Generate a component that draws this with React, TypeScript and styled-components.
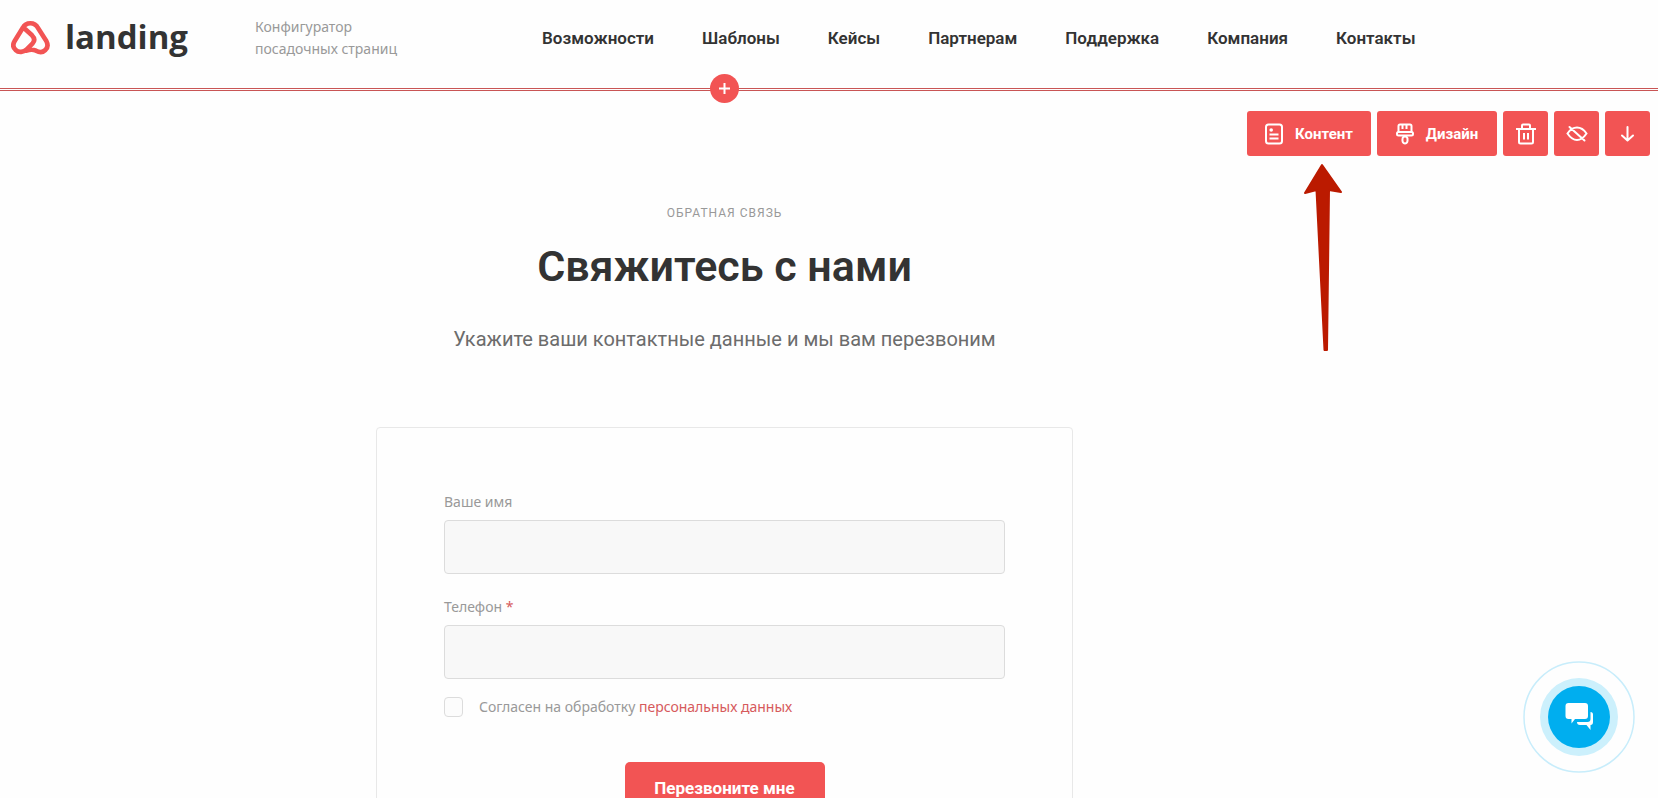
import React from 'react';
import styled, { createGlobalStyle } from 'styled-components';

const color = {
  accent: '#f25454',
  link: '#d65a5c',
  line: '#c95555',
  ink: '#333333',
  muted: '#999999',
  chat: '#00aeef',
};

const GlobalStyle = createGlobalStyle`
  *, *::before, *::after { box-sizing: border-box; }
  body {
    margin: 0;
    background: #fefefe;
    color: ${color.ink};
    font-family: Roboto, "Noto Sans", sans-serif;
  }
  button, input { font: inherit; }
`;

const Page = styled.div`
  position: relative;
  height: 100vh;
  overflow: hidden;
`;

const Header = styled.header`
  position: relative;
  display: flex;
  align-items: flex-start;
  height: 91px;
  padding: 16px 0 0 11px;
  border-bottom: 3px double ${color.line};
`;

const Logo = styled.a`
  display: flex;
  align-items: center;
  gap: 15px;
  width: 244px;
  height: 42px;
  flex: none;
  color: ${color.ink};
  text-decoration: none;
`;

const LogoText = styled.span`
  font: 700 33px/40px "Open Sans", sans-serif;
`;

const Tagline = styled.p`
  width: 287px;
  flex: none;
  margin: 0;
  color: ${color.muted};
  font: 400 14px/22px "Noto Sans", sans-serif;
`;

const Nav = styled.nav`
  display: flex;
  gap: 48px;
  height: 44px;
  align-items: center;
`;

const NavLink = styled.a`
  color: ${color.ink};
  font-size: 17px;
  line-height: 24px;
  font-weight: 600;
  text-decoration: none;
`;

const MainColumn = styled.div`
  margin-right: 209px;
`;

const AddSlot = styled.div`
  position: absolute;
  left: 0;
  right: 209px;
  top: 74px;
  display: flex;
  justify-content: center;
`;

const AddButton = styled.button`
  display: flex;
  align-items: center;
  justify-content: center;
  width: 29px;
  height: 29px;
  padding: 0;
  border: 0;
  border-radius: 50%;
  background: ${color.accent};
  color: #fff;
`;

const Tools = styled.div`
  position: absolute;
  top: 111px;
  right: 8px;
  display: flex;
  gap: 6px;
`;

const ToolButton = styled.button<{ $width?: number }>`
  display: flex;
  align-items: center;
  justify-content: center;
  gap: 12px;
  width: ${({ $width = 45 }) => $width}px;
  height: 45px;
  padding: 0;
  border: 0;
  border-radius: 3px;
  background: ${color.accent};
  color: #fff;
  font-size: 15px;
  font-weight: 700;
`;

const Pointer = styled.svg`
  position: absolute;
  top: 52px;
  left: 56px;
`;

const Section = styled.section`
  display: flex;
  flex-direction: column;
  align-items: center;
  padding-top: 114px;
`;

const Eyebrow = styled.p`
  margin: 0;
  color: ${color.muted};
  font-size: 12px;
  line-height: 16px;
  letter-spacing: 1px;
  text-transform: uppercase;
`;

const Title = styled.h1`
  margin: 19px 0 33px;
  font-size: 43px;
  line-height: 52px;
  font-weight: 600;
`;

const Subtitle = styled.p`
  margin: 0 0 74px;
  color: #6c6c6c;
  font-size: 20px;
  line-height: 28px;
`;

const Card = styled.form`
  display: flex;
  flex-direction: column;
  width: 100%;
  max-width: 697px;
  padding: 63px 67px;
  border: 1px solid #e8e8e8;
  border-radius: 4px;
`;

const Field = styled.label`
  display: flex;
  flex-direction: column;
  gap: 7px;
  margin-bottom: 22px;
  color: ${color.muted};
  font: 400 14px/22px "Noto Sans", sans-serif;
`;

const Required = styled.span`
  color: ${color.link};
`;

const Input = styled.input`
  width: 100%;
  height: 54px;
  padding: 0 16px;
  border: 1px solid #dcdcdc;
  border-radius: 4px;
  background: #f8f8f8;
`;

const Consent = styled.div`
  display: flex;
  align-items: center;
  gap: 16px;
  margin-top: -5px;
  color: ${color.muted};
  font: 400 14px/22px "Noto Sans", sans-serif;
`;

const Checkbox = styled.input`
  appearance: none;
  width: 19px;
  height: 20px;
  margin: 0;
  border: 1px solid #dcdcdc;
  border-radius: 4px;
  background: #fcfcfc;
`;

const TextLink = styled.a`
  color: ${color.link};
  text-decoration: none;
`;

const Submit = styled.button`
  align-self: center;
  width: 200px;
  height: 51px;
  margin-top: 44px;
  border: 0;
  border-radius: 5px;
  background: ${color.accent};
  color: #fff;
  font-size: 17px;
  font-weight: 700;
`;

const ChatButton = styled.button`
  position: fixed;
  right: 23px;
  bottom: 25px;
  width: 112px;
  height: 112px;
  padding: 0;
  border: 0;
  border-radius: 50%;
  background: none;
`;

const LogoMark = () => (
  <svg width="39" height="35" viewBox="32 58 117 105" fill="none" stroke={color.accent} strokeWidth="14" strokeLinecap="round" strokeLinejoin="round" aria-hidden="true">
    <path d="M70 81 L95 104 C103 112 103 121 97 128 L79 146 C70 155 55 157 46 148 C38 141 37 131 43 121 L67 82 C77 63 103 63 113 82 L138 121 C143 131 143 141 135 148 C127 156 116 155 107 150 C98 146 87 147 79 150" />
  </svg>
);

const PlusIcon = () => (
  <svg width="11" height="11" viewBox="0 0 11 11" stroke="currentColor" strokeWidth="2" aria-hidden="true">
    <path d="M5.5 0V11M0 5.5H11" />
  </svg>
);

const ContentIcon = () => (
  <svg width="18" height="22" viewBox="0 0 18 22" fill="none" stroke="currentColor" strokeWidth="2" aria-hidden="true">
    <rect x="1" y="1.5" width="16" height="19" rx="2.5" />
    <circle cx="6.2" cy="7" r="1.8" fill="currentColor" stroke="none" />
    <path d="M4.5 11.5H13.5M4.5 15.5H13.5" />
  </svg>
);

const BrushIcon = () => (
  <svg width="18" height="22" viewBox="0 0 18 22" fill="none" stroke="currentColor" strokeWidth="2" strokeLinejoin="round" aria-hidden="true">
    <path d="M2.5 9V3Q2.5 1.5 4 1.5H14Q15.5 1.5 15.5 3V9" />
    <path d="M6.5 2V6M10.5 2V6" />
    <rect x="1" y="9" width="16" height="3.5" rx="1.5" />
    <path d="M6.5 15.500Q6 20.500 9 20.500T11.500 15.500Q11 13.500 9 13.500T6.500 15.500" />
  </svg>
);

const TrashIcon = () => (
  <svg width="20" height="22" viewBox="0 0 20 22" fill="none" stroke="currentColor" strokeWidth="2" aria-hidden="true">
    <path d="M0 6H20M6 6V2.5Q6 1.5 7 1.5H13Q14 1.5 14 2.5V6" />
    <path d="M3 6V19Q3 20.5 4.5 20.5H15.5Q17 20.5 17 19V6" />
    <path d="M8 10V16.5M12 10V16.5" />
  </svg>
);

const HiddenIcon = () => (
  <svg width="22" height="18" viewBox="0 0 22 18" fill="none" stroke="currentColor" strokeWidth="2" strokeLinecap="round" aria-hidden="true">
    <path d="M1.5 8.5C4.5 4 7.5 2.5 11 2.5S17.5 4 20.5 8.5C17.5 13 14.5 15 11 15S4.5 13 1.5 8.5ZM3.5 2L18.5 15.5" />
  </svg>
);

const DownIcon = () => (
  <svg width="13" height="16" viewBox="0 0 13 16" fill="none" stroke="currentColor" strokeWidth="2" strokeLinecap="round" strokeLinejoin="round" aria-hidden="true">
    <path d="M6.5 1V14M1 9.5L6.5 14.5L12 9.5" />
  </svg>
);

const ChatIcon = () => (
  <svg width="112" height="112" viewBox="0 0 112 112" aria-hidden="true">
    <circle cx="56" cy="56" r="55" fill="none" stroke="#c8edfb" strokeWidth="1.5" />
    <circle cx="56" cy="56" r="39" fill="#ccf0fc" />
    <circle cx="56" cy="56" r="31" fill={color.chat} />
    <path fill="#fff" d="M45.500 42H62Q65 42 65 45V55Q65 58 62 58H52L48.500 62.500V58H45.500Q42.500 58 42.500 55V45Q42.500 42 45.500 42Z" />
    <path fill="#fff" d="M67.500 51Q70 51 70 53.500V61Q70 64 67.500 64V69L63.500 64H57Q54 64 54 61H64.500Q67.500 61 67.500 58Z" />
  </svg>
);

const navItems = ['Возможности', 'Шаблоны', 'Кейсы', 'Партнерам', 'Поддержка', 'Компания', 'Контакты'];

export default function App() {
  return (
    <Page>
      <GlobalStyle />
      <Header>
        <Logo href="#">
          <LogoMark />
          <LogoText>landing</LogoText>
        </Logo>
        <Tagline>
          Конфигуратор
          <br />
          посадочных страниц
        </Tagline>
        <Nav>
          {navItems.map((item) => (
            <NavLink key={item} href="#">
              {item}
            </NavLink>
          ))}
        </Nav>
      </Header>

      <MainColumn>
        <Section>
          <Eyebrow>Обратная связь</Eyebrow>
          <Title>Свяжитесь с нами</Title>
          <Subtitle>Укажите ваши контактные данные и мы вам перезвоним</Subtitle>
          <Card>
            <Field>
              <span>Ваше имя</span>
              <Input type="text" name="name" />
            </Field>
            <Field>
              <span>
                Телефон <Required>*</Required>
              </span>
              <Input type="tel" name="phone" />
            </Field>
            <Consent>
              <Checkbox type="checkbox" id="consent" />
              <label htmlFor="consent">
                Согласен на обработку <TextLink href="#">персональных данных</TextLink>
              </label>
            </Consent>
            <Submit type="button">Перезвоните мне</Submit>
          </Card>
        </Section>
      </MainColumn>

      <AddSlot>
        <AddButton type="button" aria-label="Добавить блок">
          <PlusIcon />
        </AddButton>
      </AddSlot>

      <Tools>
        <ToolButton type="button" $width={124}>
          <ContentIcon />
          Контент
        </ToolButton>
        <ToolButton type="button" $width={120}>
          <BrushIcon />
          Дизайн
        </ToolButton>
        <ToolButton type="button" aria-label="Удалить">
          <TrashIcon />
        </ToolButton>
        <ToolButton type="button" aria-label="Скрыть">
          <HiddenIcon />
        </ToolButton>
        <ToolButton type="button" aria-label="Вниз">
          <DownIcon />
        </ToolButton>
        <Pointer width="40" height="189" viewBox="0 0 40 189" fill="#bb1a00" stroke="#bb1a00" strokeWidth="2" strokeLinejoin="round" aria-hidden="true">
          <path d="M19 2L38 29L26 27L24 187H21.5L13.5 27L2 30Z" />
        </Pointer>
      </Tools>

      <ChatButton type="button" aria-label="Чат">
        <ChatIcon />
      </ChatButton>
    </Page>
  );
}
